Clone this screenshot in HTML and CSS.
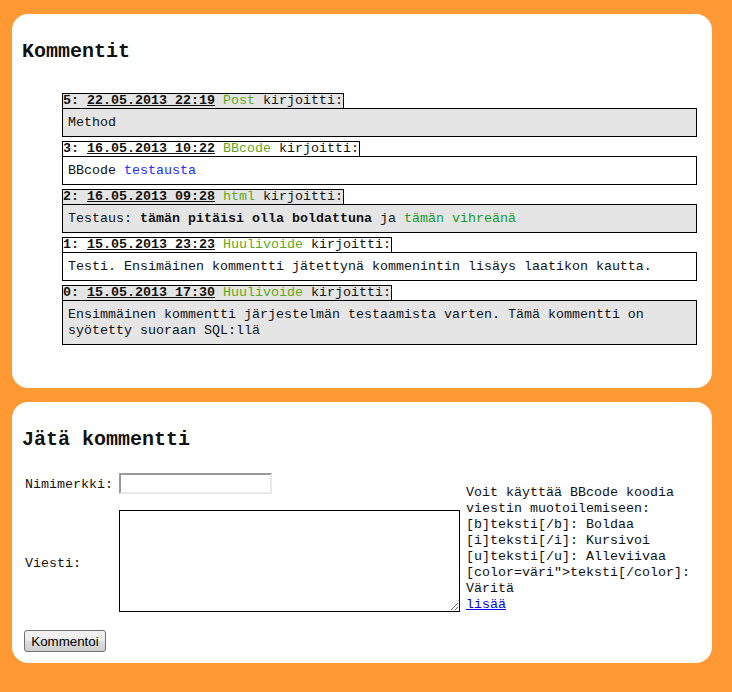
FILE: index.html
```html
<!DOCTYPE html>
<html lang="fi">
<head>
<meta charset="utf-8">
<title>Kommentit</title>
<link rel="stylesheet" href="styles.css">
</head>
<body>
<div class="panel panel-comments">
  <h2 class="title">Kommentit</h2>
  <div class="comments">
    <div class="comment odd">
      <div class="comment-head"><b>5: <u>22.05.2013 22:19</u></b> <span class="author">Post</span> kirjoitti:</div>
      <div class="comment-body">Method</div>
    </div>
    <div class="comment even">
      <div class="comment-head"><b>3: <u>16.05.2013 10:22</u></b> <span class="author">BBcode</span> kirjoitti:</div>
      <div class="comment-body">BBcode <span class="blue">testausta</span></div>
    </div>
    <div class="comment odd">
      <div class="comment-head"><b>2: <u>16.05.2013 09:28</u></b> <span class="author">html</span> kirjoitti:</div>
      <div class="comment-body">Testaus: <b>tämän pitäisi olla boldattuna</b> ja <span class="green">tämän vihreänä</span></div>
    </div>
    <div class="comment even">
      <div class="comment-head"><b>1: <u>15.05.2013 23:23</u></b> <span class="author">Huulivoide</span> kirjoitti:</div>
      <div class="comment-body">Testi. Ensimäinen kommentti jätettynä kommenintin lisäys laatikon kautta.</div>
    </div>
    <div class="comment odd">
      <div class="comment-head"><b>0: <u>15.05.2013 17:30</u></b> <span class="author">Huulivoide</span> kirjoitti:</div>
      <div class="comment-body">Ensimmäinen kommentti järjestelmän testaamista varten. Tämä kommentti on syötetty suoraan SQL:llä</div>
    </div>
  </div>
</div>
<div class="panel panel-form">
  <h2 class="title">Jätä kommentti</h2>
  <form class="form">
    <div class="fields">
      <label class="label label-name" for="nick">Nimimerkki:</label>
      <input class="input" id="nick" type="text">
      <label class="label label-msg" for="msg">Viesti:</label>
      <textarea class="textarea" id="msg"></textarea>
      <div class="help">Voit käyttää BBcode koodia viestin muotoilemiseen:<br>[b]teksti[/b]: Boldaa<br>[i]teksti[/i]: Kursivoi<br>[u]teksti[/u]: Alleviivaa<br>[color=väri"&gt;teksti[/color]: Väritä<br><a href="#">lisää</a></div>
    </div>
    <button class="button" type="button">Kommentoi</button>
  </form>
</div>
</body>
</html>
```
FILE: styles.css
```css
html, body {
  margin: 0;
  padding: 0;
}
body {
  background: #ff9933;
  padding: 14px 20px 20px 12px;
  font-family: "Liberation Mono", "Courier New", monospace;
  font-size: 13.333px;
  line-height: 16px;
  color: #111;
}
.panel {
  width: 680px;
  background: #fff;
  border-radius: 16px;
  padding: 26px 10px 43px 10px;
}
.panel-form {
  margin-top: 14px;
  padding-bottom: 11px;
}
.title {
  margin: 0;
  font-size: 20px;
  line-height: 23px;
  font-weight: bold;
}
.comments {
  margin: 30px 5px 0 40px;
}
.comment {
  margin-bottom: 4px;
}
.comment:last-child {
  margin-bottom: 0;
}
.comment-head {
  width: fit-content;
  border: 1px solid #000;
  border-bottom: none;
  line-height: 14px;
  padding: 0;
}
.comment-body {
  border: 1px solid #000;
  padding: 6px 5px 5px 5px;
  line-height: 16px;
}
.odd .comment-head,
.odd .comment-body {
  background: #e5e5e5;
}
.author {
  color: #5fa81a;
}
.blue {
  color: #2a2aff;
}
.green {
  color: #1a9a22;
}
.form {
  margin-top: 22px;
}
.fields {
  display: grid;
  grid-template-columns: 97px 341px 236px;
  grid-template-rows: 21px 102px;
  row-gap: 16px;
  column-gap: 0;
}
.label {
  padding-left: 3px;
  align-self: center;
}
.label-name {
  grid-column: 1;
  grid-row: 1;
  padding-top: 3px;
}
.label-msg {
  grid-column: 1;
  grid-row: 2;
  padding-top: 5px;
}
.input {
  grid-column: 2;
  grid-row: 1;
  width: 153px;
  height: 21px;
  box-sizing: border-box;
  margin: 0;
  border: 2px solid;
  border-color: #999 #e8e8e8 #e8e8e8 #999;
  padding: 1px 2px;
  font: inherit;
  background: #fff;
}
.textarea {
  grid-column: 2;
  grid-row: 2;
  width: 341px;
  height: 102px;
  box-sizing: border-box;
  margin: 0;
  border: 1px solid #000;
  padding: 2px;
  font: inherit;
}
.help {
  grid-column: 3;
  grid-row: 1 / span 2;
  align-self: end;
  margin: 0 0 -1px 6px;
  line-height: 16px;
}
.help a {
  color: #0000ee;
}
.button {
  display: block;
  margin: 18px 0 0 2px;
  width: 82px;
  height: 22px;
  box-sizing: border-box;
  padding: 0;
  font-family: "Liberation Sans", Arial, sans-serif;
  font-size: 13.333px;
  color: #000;
  border: 1px solid #707070;
  border-radius: 3px;
  background: linear-gradient(#f2f2f2 0%, #ebebeb 50%, #dddddd 50%, #cfcfcf 100%);
}
```
